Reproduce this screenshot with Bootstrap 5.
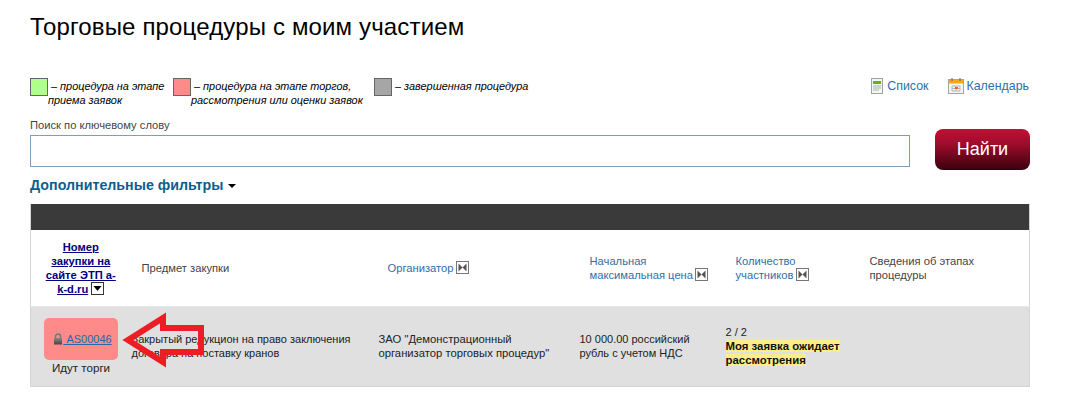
<!DOCTYPE html>
<html lang="ru">
<head>
<meta charset="utf-8">
<title>Торговые процедуры</title>
<link href="https://cdn.jsdelivr.net/npm/bootstrap@5.3.0/dist/css/bootstrap.min.css" rel="stylesheet">
<style>
html,body{background:#fff;}
body{font-family:"Liberation Sans",Arial,sans-serif;font-size:12px;line-height:14px;color:#333;overflow:hidden;}
.pg{position:relative;width:1000px;margin-left:30px;height:413px;}
.ttl{font-size:24px;line-height:28px;font-weight:400;color:#000;margin:0;padding-top:13px;height:78px;letter-spacing:.15px;}
.lgnd{height:40px;font-size:10.9px;line-height:14px;font-style:italic;color:#000;}
.lg-i{position:relative;padding-left:18px;padding-top:1px;}
.lg-i1{width:143px;}.lg-i2{width:201px;}
.sw{position:absolute;left:0;top:0;width:18px;height:18px;border:1px solid #666;}
.sw-g{background:#afff8a;}.sw-r{background:#ff8a8a;}.sw-d{background:#a6a6a6;}
.vw{font-style:normal;gap:20px;padding-right:1px;}
.vw a{color:#2f6ea8;text-decoration:none;font-size:12.4px;line-height:16px;}
.vl1{gap:4px;}.vl2{gap:2px;}
.lbl{color:#444;font-size:11.2px;height:17px;line-height:14px;}
.srch{width:880px;height:32px;border:1px solid #7f9db9;border-radius:0;}
.go{width:95px;height:41px;border:0;border-radius:8px;font-size:18px;color:#fff;background:linear-gradient(#c20f33 0,#a00c2c 35%,#3a000e 100%);padding:0;margin-top:-6px;}
.flt{font-size:14.25px;font-weight:700;line-height:18px;margin-top:6px;height:28px;}
.flt a{color:#0b5f8f;text-decoration:none;}
.crt{display:inline-block;border:4px solid transparent;border-top:4px solid #000;border-bottom:0;margin-left:5px;vertical-align:2px;}
.tb{width:1000px;table-layout:fixed;border-collapse:collapse;border:1px solid #d4d4d4;border-top:0;margin:0;}
.tb .bar td{background:#3a3a3a;height:26px;padding:0;border:0;}
.tb th{font-weight:400;font-size:11.2px;color:#444;height:76px;padding:0 5px 0 15px;vertical-align:middle;border:0;background:#fff;}
.tb th a{color:#2f6ea8;text-decoration:none;}
.tb th.fst{padding:0 8px 0 12px;text-align:center;font-weight:700;font-size:11.2px;}
.tb th.fst a{color:#000080;text-decoration:underline;}
.tb td.c{background:#e0e0e0;height:80px;padding:0 5px;vertical-align:middle;color:#222;font-size:11px;border:0;border-top:1px solid #e8e8e8;}
.tb td.org{padding-left:6px;padding-right:0;font-size:11.25px;}
.w1{width:96px}.w2{width:246px}.w3{width:202px}.w4{width:146px}.w5{width:134px}
.pill{display:block;background:#ff8a8a;border-radius:5px;width:74px;height:42px;line-height:42px;margin-left:8px;padding-left:3px;text-align:center;white-space:nowrap;}
.pill a{color:#2468a8;text-decoration:underline;font-size:11px;}
.st{display:block;text-align:center;margin-top:1px;margin-left:8px;width:74px;white-space:nowrap;color:#222;font-size:11.6px;}
.wt{background:#ffee88;font-weight:700;color:#111;font-size:11.4px;}
.srt{vertical-align:-2px;margin-left:-1px;}
.fst .srt{margin-left:0;}
.lk{vertical-align:-2px;}
.arr{position:absolute;left:90px;top:310px;}
</style>
</head>
<body>
<div class="pg">
  <h1 class="ttl">Торговые процедуры с моим участием</h1>
  <div class="d-flex justify-content-between lgnd">
    <div class="d-flex">
      <div class="lg-i lg-i1"><span class="sw sw-g"></span>&nbsp;– процедура на этапе<br>приема заявок</div>
      <div class="lg-i lg-i2"><span class="sw sw-r"></span>&nbsp;– процедура на этапе торгов,<br>рассмотрения или оценки заявок</div>
      <div class="lg-i"><span class="sw sw-d"></span>&nbsp;– завершенная процедура</div>
    </div>
    <div class="d-flex vw">
      <a href="#" class="d-flex align-items-start vl1">
        <svg width="12" height="16" viewBox="0 0 12 16"><rect x=".5" y=".5" width="11" height="15" fill="#f4f6f2" stroke="#9aa6a0"/><rect x="2" y="3" width="8" height="3" fill="#6ab01e"/><path d="M2 8h8M2 10h8M2 12h6" stroke="#a8b4ae"/></svg>Список</a>
      <a href="#" class="d-flex align-items-start vl2">
        <svg width="16" height="16" viewBox="0 0 16 16"><rect x=".5" y="1.500" width="15" height="14" fill="#f4f4f0" stroke="#a5a5a0"/><rect x="1" y="2" width="14" height="3.500" fill="#f4a818"/><path d="M4 0v3M12 0v3" stroke="#77644a"/><path d="M4 8h8v5H4zM8 8v5M4 10.500h8" fill="none" stroke="#b5b5b5"/><rect x="7" y="9" width="3" height="2" fill="#e8661a"/></svg>Календарь</a>
    </div>
  </div>
  <div class="lbl">Поиск по ключевому слову</div>
  <div class="d-flex justify-content-between align-items-start">
    <input class="srch form-control p-0" type="text" aria-label="Поиск">
    <button class="go btn" type="button">Найти</button>
  </div>
  <div class="flt"><a href="#">Дополнительные фильтры</a><span class="crt"></span></div>
  <table class="tb table">
    <colgroup><col class="w1"><col class="w2"><col class="w3"><col class="w4"><col class="w5"><col></colgroup>
    <tr class="bar"><td colspan="6"></td></tr>
    <tr>
      <th class="fst"><a href="#">Номер закупки на сайте ЭТП a-k-d.ru</a> <svg class="srt" width="13" height="13" viewBox="0 0 13 13"><rect x=".5" y=".5" width="12" height="12" fill="#fff" stroke="#333"/><path d="M2.500 4h8L6.500 9z" fill="#000"/></svg></th>
      <th>Предмет закупки</th>
      <th><a href="#">Организатор</a> <svg class="srt" width="13" height="13" viewBox="0 0 13 13"><rect x=".5" y=".5" width="12" height="12" fill="#fff" stroke="#777"/><path d="M2.500 2.500 6.500 6.500l-4 4zM10.500 2.500 6.500 6.500l4 4z" fill="#555"/></svg></th>
      <th><a href="#">Начальная максимальная цена</a> <svg class="srt" width="13" height="13" viewBox="0 0 13 13"><rect x=".5" y=".5" width="12" height="12" fill="#fff" stroke="#777"/><path d="M2.500 2.500 6.500 6.500l-4 4zM10.500 2.500 6.500 6.500l4 4z" fill="#555"/></svg></th>
      <th><a href="#">Количество участников</a> <svg class="srt" width="13" height="13" viewBox="0 0 13 13"><rect x=".5" y=".5" width="12" height="12" fill="#fff" stroke="#777"/><path d="M2.500 2.500 6.500 6.500l-4 4zM10.500 2.500 6.500 6.500l4 4z" fill="#555"/></svg></th>
      <th>Сведения об этапах процедуры</th>
    </tr>
    <tr>
      <td class="c"><span class="pill"><svg width="10" height="12" viewBox="0 0 10 12" class="lk"><defs><linearGradient id="lg" x1="0" y1="0" x2="0" y2="1"><stop offset="0" stop-color="#888"/><stop offset="1" stop-color="#444"/></linearGradient></defs><path d="M2.500 5V3.500a2.500 2.500 0 0 1 5 0V5" fill="none" stroke="#777" stroke-width="1.500"/><rect x="1" y="5" width="8" height="6.500" fill="url(#lg)"/></svg><a href="#">&nbsp;AS00046</a></span><span class="st">Идут торги</span></td>
      <td class="c">Закрытый редукцион на право заключения договора на поставку кранов</td>
      <td class="c org">ЗАО "Демонстрационный организатор торговых процедур"</td>
      <td class="c">10 000.00 российский рубль с учетом НДС</td>
      <td class="c">2 / 2<br><span class="wt">Моя заявка ожидает рассмотрения</span></td>
      <td class="c"></td>
    </tr>
  </table>
  <svg class="arr" width="90" height="62" viewBox="0 0 90 62"><path d="M8 30 43 8v10h38v24H43v10z" fill="none" stroke="#ee1c25" stroke-width="6" stroke-linejoin="miter"/></svg>
</div>
<script src="https://cdn.jsdelivr.net/npm/bootstrap@5.3.0/dist/js/bootstrap.bundle.min.js"></script>
</body>
</html>
